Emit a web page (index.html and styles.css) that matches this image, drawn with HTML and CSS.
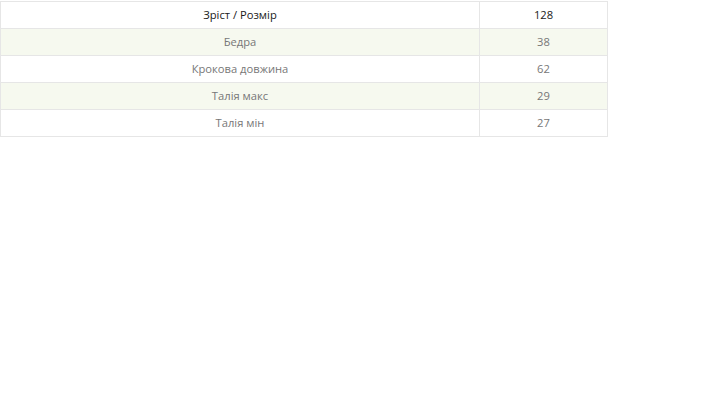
FILE: index.html
```html
<!DOCTYPE html>
<html lang="uk">
<head>
<meta charset="utf-8">
<link rel="stylesheet" href="styles.css">
</head>
<body>
<table class="size-table">
  <tr class="head"><td class="name">Зріст / Розмір</td><td class="val">128</td></tr>
  <tr class="alt"><td class="name">Бедра</td><td class="val">38</td></tr>
  <tr><td class="name">Крокова довжина</td><td class="val">62</td></tr>
  <tr class="alt"><td class="name">Талія макс</td><td class="val">29</td></tr>
  <tr><td class="name">Талія мін</td><td class="val">27</td></tr>
</table>
</body>
</html>
```
FILE: styles.css
```css
html, body {
  margin: 0;
  padding: 0;
  background: #fff;
}
body {
  padding-top: 1px;
  font-family: "Open Sans", "Liberation Sans", sans-serif;
  font-size: 11.2px;
  color: #777;
}
.size-table {
  border-collapse: collapse;
  width: 608px;
}
.size-table td {
  border: 1px solid #e6e6e6;
  height: 27px;
  padding: 0 8px 2px;
  text-align: center;
  vertical-align: middle;
  box-sizing: border-box;
}
.size-table .name {
  width: 479px;
}
.size-table .head td {
  color: #1a1a1a;
}
.size-table .alt td {
  background: #f6f9ef;
}
```
